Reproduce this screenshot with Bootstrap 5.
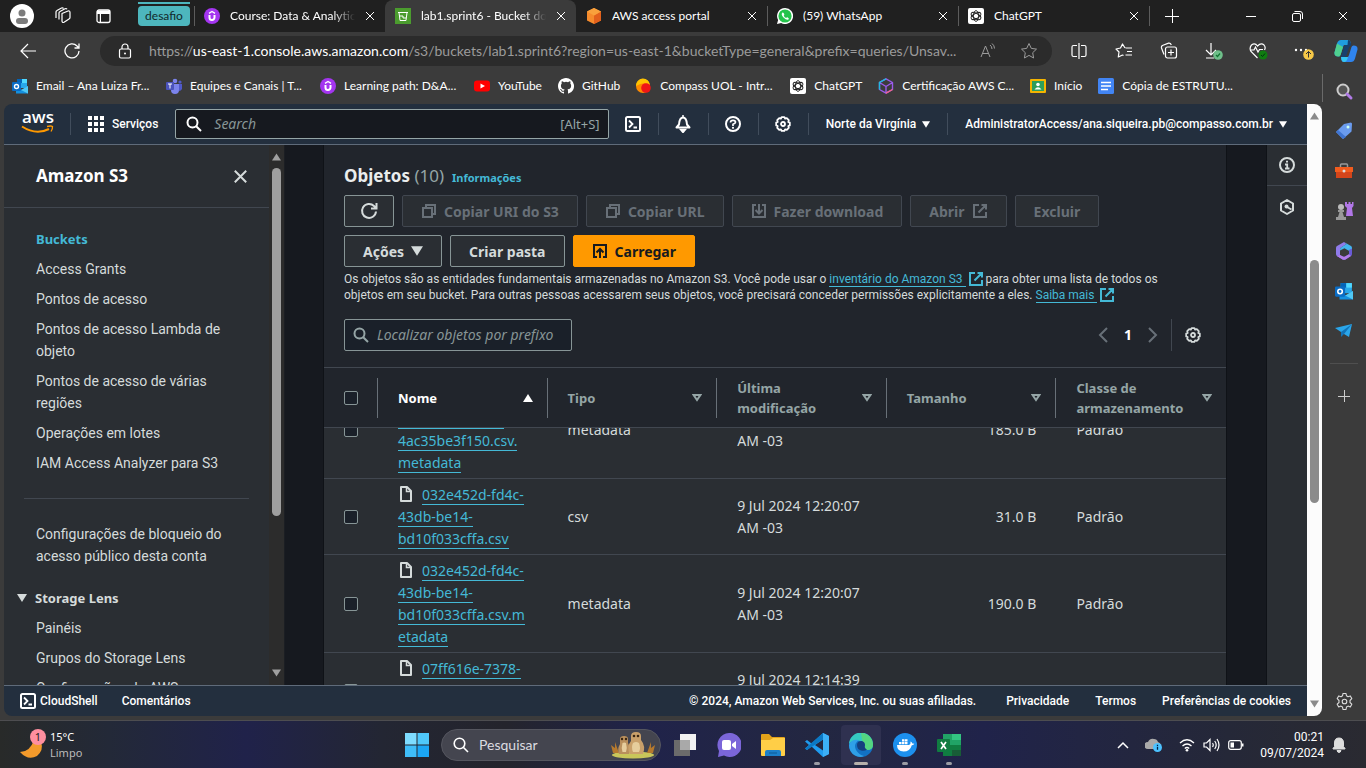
<!DOCTYPE html>
<html lang="pt-BR" data-bs-theme="dark">
<head>
<meta charset="utf-8">
<meta name="viewport" content="width=device-width, initial-scale=1">
<title>lab1.sprint6 - Bucket do S3</title>
<link href="https://cdn.jsdelivr.net/npm/bootstrap@5.3.0/dist/css/bootstrap.min.css" rel="stylesheet">
<style>
:root{--chrome:Lato,"Open Sans",sans-serif;--ember:"Noto Sans","Open Sans",sans-serif;--ember-text:Roboto,"Noto Sans",sans-serif;
  --line:#414750;--panel:#2a2e33;--head:#21252c;--ink:#d5dbdb;--link:#44b9d6}
body{background:#3b3b3b;color:#fff;font-family:var(--chrome);font-size:12px;line-height:16px;overflow:hidden}
svg{display:block;flex:none}
.ln{fill:none}
.ln:not([stroke]){stroke:currentColor}
.plain{background:none;border:0;padding:0;color:inherit;font:inherit;display:flex;align-items:center;justify-content:center}
a{color:inherit;text-decoration:none}

/* browser: tabs */
.tab-strip{height:32px;background:#202020;padding-left:10px}
.strip-start{width:128px}
.avatar{width:24px;height:24px;border-radius:50%;background:#fff;overflow:hidden}
.group-tag{height:28px;width:52px;padding-top:2px}
.group-tag span{background:#4db6bd;color:#12292b;border-radius:4px;height:20px;line-height:19px;text-align:center;display:block;margin-top:2px}
.group-tag::before{content:"";display:block;height:2px;background:#4db6bd}
.btab{width:191px;padding:0 10px;gap:10px;min-width:0}
.btab .ttl{flex:1;overflow:hidden;white-space:nowrap}
.btab .fade-end{-webkit-mask-image:linear-gradient(90deg,#000 82%,transparent);mask-image:linear-gradient(90deg,#000 82%,transparent)}
.btab.cur{background:#3b3b3b;border-radius:8px 8px 0 0}
.tick{width:1px;height:20px;background:#5c5c5c;margin:6px -1px 0 0;flex:none}
.win-btn{width:46px;height:32px}

/* browser: address row and bookmarks */
.tool-row{height:38px;padding:0 4px 0 6px}
.tool-btn{width:45px;height:30px}
.nav-btn{width:44px;height:30px}
.url-box{background:#2b2b2b;border-radius:15px;height:30px;padding:0 14px 0 17px;margin-left:6px;font-size:14px;line-height:20px;color:#9b9b9b;min-width:0}
.url-box b{font-weight:400;color:#fff}
.bm-row{height:34px;padding:0 8px 2px;gap:16px;white-space:nowrap;overflow:hidden;flex:none}
.bm-row a{display:flex;align-items:center;gap:8px}
.bm-row .wide{min-width:138px}
.side-bar{width:44px;padding:11px 0 10px;gap:20px}
.side-bar hr{width:28px;margin:2px 0 6px;border-color:#8a8a8a}
.side-tick{width:1px;height:28px;background:#6a6a6a;margin:4px -1px 0 0;flex:none}

/* page frame */
.page-view{margin:0 0 4px 4px;border-radius:8px;overflow:hidden}
.sb{flex:none;width:15px;padding:8px 0;align-items:center}
.sb i{width:9px;border-radius:5px;background:#8b8b8b;margin:7px 0}
.sb-page{background:#fcfcfc;color:#8b8b8b}
.sb-nav{background:#2c2c2c;color:#9f9f9f;border-right:1px solid #1b1e23;width:16px}
.sb-nav i{background:#9f9f9f}

/* console header and footer */
.aws-top{height:41px;background:#232f3e;border-bottom:1px solid #5f6b7a;font-family:var(--ember-text);font-weight:500}
.vr-nav{width:1px;height:22px;background:#414d5c;align-self:center;flex:none}
.aws-logo{width:66px;padding-left:17px}
.svc{padding:0 17px;gap:8px}
.top-search{height:30px;background:#16191f;border:1px solid #95a5a6;border-radius:2px;font-family:var(--ember);font-size:14px;font-weight:400}
.top-search span{color:#95a5a6;font-size:13px}
.top-search input,.find input{background:none;border:0;outline:0;color:#fff;min-width:0;padding:0}
.top-search input::placeholder,.find input::placeholder{font-style:italic;color:#879596;opacity:1}
.ico-cell{width:49px}
.menu-cell{padding:0 17px;gap:6px}
.aws-foot{height:31px;background:#232f3e;border-top:1px solid #5f6b7a;font-family:var(--ember-text);font-weight:500;padding:0 16px}
.foot-links{gap:26px}

/* service navigation */
.s3-nav{width:281px;background:var(--panel);color:var(--ink)}
.s3-nav .scroll-part{overflow:hidden;font:14px/22px var(--ember-text)}
.nav-head{height:63px;padding:0 22px 0 32px;border-bottom:1px solid var(--line);flex:none}
.nav-head h2{font:700 17px/22px var(--ember);margin:0}
.nav-links{padding:20px 32px 0;gap:8px;margin:0;list-style:none}
.nav-links .cur-link{color:var(--link);font:700 13px/22px var(--ember)}
.nav-rule{height:1px;background:var(--line);margin:24px 20px 4px;flex:none}
.sec-btn{font:700 13px/22px var(--ember);gap:8px;margin:20px 0 0 13px;align-self:flex-start}

/* bucket content */
.well{background:#16191f;padding:0 39px 0 38px}
.obj{background:var(--head);border:solid #0f1217;border-width:0 1px;color:var(--ink)}
.obj-head{padding:20px 20px 16px}
.obj-head h1{font:700 17px/22px var(--ember);margin:0;color:#eaeded}
.obj-head h1 small{font-weight:400;color:#95a5a6;font-size:17px}
.info{font:700 11px/16px var(--ember);color:var(--link)}
.acts{gap:8px;max-width:840px}
.btn-c{--bs-btn-font-family:var(--ember);--bs-btn-font-size:14px;--bs-btn-font-weight:700;--bs-btn-padding-x:18px;--bs-btn-padding-y:0;
  --bs-btn-border-radius:2px;--bs-btn-color:#d5dbdb;--bs-btn-bg:#2a2e33;--bs-btn-border-color:#879596;--bs-btn-hover-color:#fff;--bs-btn-hover-border-color:#d5dbdb;
  --bs-btn-disabled-color:#687078;--bs-btn-disabled-bg:#2a2e33;--bs-btn-disabled-border-color:#414750;--bs-btn-disabled-opacity:1;
  height:32px;display:flex;align-items:center;gap:7px}
.btn-sq{--bs-btn-padding-x:15px}
.btn-o{--bs-btn-color:#16191f;--bs-btn-bg:#f90;--bs-btn-border-color:#f90}
.desc{font:12px/16px var(--ember-text);margin:4px 0 16px;max-width:830px}
.desc a{color:var(--link);border-bottom:1px solid}
.desc svg{display:inline;vertical-align:-3px;color:var(--link)}
.find{width:228px;height:32px;border:1px solid #879596;border-radius:2px;background:#1a2029;font:14px/22px var(--ember);color:#95a5a6}
.pager{gap:16px;font:700 14px/22px var(--ember);color:#687078;padding-right:5px}
.pager-rule{width:1px;height:32px;background:#414750;margin:0 -3px}

/* object table */
.rows{overflow:hidden;min-height:0;border-top:1px solid var(--line)}
.obj-table{width:100%;table-layout:fixed;border-collapse:separate;border-spacing:0;font:14px/22px var(--ember)}
.obj-table th{position:sticky;top:0;z-index:1;height:60px;background:var(--head);border-bottom:1px solid var(--line);padding:0;font:700 13px/20px var(--ember);color:#95a5a6}
.obj-table th>div{height:40px;border-right:1px solid #687078;padding:0 14px 0 20px;display:flex;align-items:center;justify-content:space-between}
.obj-table th:last-child>div{border:0}
.obj-table td{background:var(--panel);border-bottom:1px solid var(--line);padding:5px 20px 4px;vertical-align:middle}
.obj-table td a{color:var(--link);border-bottom:1px solid}
.obj-table td svg{display:inline;vertical-align:-2px;margin-right:8px}
.col-tick{width:54px}
.tickbox{appearance:none;display:block;width:14px;height:14px;margin:0;border:1px solid #879596;border-radius:2px;background:#1a2029}
.tools{width:41px;background:var(--panel);border-left:1px solid #0f1217;color:var(--ink)}
.tools button{height:41px}
.tools button:first-child{border-bottom:1px solid var(--line)}

/* taskbar */
.task{height:48px;border-top:1px solid #4d4d50;display:grid;grid-template-columns:1fr auto 1fr;
  background:linear-gradient(90deg,#282a29 0,#232938 8%,#20224a 18%,#232633 28%,#24242c 37%,#20234a 47%,#232741 60%,#20234a 72%,#252838 90%,#2a2a31 100%)}
.weather{padding-left:19px;font-family:var(--ember);font-size:11px;gap:4px}
.apps{gap:4px}
.app{width:40px;height:40px;border-radius:4px;position:relative}
.app.open::after{content:"";position:absolute;bottom:0;width:6px;height:3px;border-radius:2px;background:#9c9ca4}
.app.front{background:#2f3150}
.app.front::after{width:14px;background:#b7b0ab}
.task-find{width:220px;height:32px;border-radius:16px;background:#44454f;border:1px solid #55565f;padding:0 4px 0 11px;gap:10px}
.task-find input{background:none;border:0;outline:0;width:120px;font-size:14px;color:#ddd;padding:0}
.task-find input::placeholder{color:#dcdce0;opacity:1}
.tray{padding-right:20px;font-family:var(--ember-text)}
</style>
</head>
<body class="vh-100 d-flex flex-column">

<svg width="0" height="0" class="position-absolute">
 <symbol id="x" viewBox="0 0 10 10"><path class="ln" d="M1 1l8 8M9 1l-8 8"/></symbol>
 <symbol id="udemy" viewBox="0 0 16 16"><circle cx="8" cy="8" r="8" fill="#a435f0"/><path class="ln" stroke="#fff" stroke-width="2" d="M5.500 7v2.500a2.500 2.500 0 0 0 5 0V7"/><path class="ln" stroke="#fff" stroke-width="1.300" d="M5 5.400L8 3.500l3 1.900"/></symbol>
 <symbol id="gpt" viewBox="0 0 16 16"><rect width="16" height="16" rx="2" fill="#fff"/><g fill="none" stroke="#222" stroke-width=".9"><ellipse cx="8" cy="8" rx="2.600" ry="5.400"/><ellipse cx="8" cy="8" rx="2.600" ry="5.400" transform="rotate(60 8 8)"/><ellipse cx="8" cy="8" rx="2.600" ry="5.400" transform="rotate(120 8 8)"/></g></symbol>
 <symbol id="outlook" viewBox="0 0 16 16"><rect x="5" y="1" width="10" height="9" fill="#28a8ea"/><path d="M5 1h5v4H5z" fill="#0364b8"/><path d="M10 1h5v4h-5z" fill="#50d9ff"/><path d="M4 8l6 4 6-4v7.500H4z" fill="#1490df"/><path d="M16 8v7.500L9 12z" fill="#50c8f5"/><rect y="4" width="9" height="9" rx="1" fill="#0a6cc4"/><circle cx="4.500" cy="8.500" r="2" fill="none" stroke="#fff" stroke-width="1.400"/></symbol>
 <symbol id="ext" viewBox="0 0 16 16"><path class="ln" stroke-width="2" d="M7 2H2v12h12V9M9.500 2H14v4.500M14 2L6.500 9.500"/></symbol>
 <symbol id="copy" viewBox="0 0 16 16"><path class="ln" stroke-width="2" d="M2 5h9v9H2zM5 5V2h9v9h-3"/></symbol>
 <symbol id="gear" viewBox="0 0 16 16"><circle class="ln" cx="8" cy="8" r="2" stroke-width="1.800"/><path class="ln" stroke-width="1.800" stroke-linejoin="round" d="M6.600 1.200h2.800l.7 1.500 1.700-.5 2 2-.5 1.700 1.500.7v2.800l-1.500.7.5 1.700-2 2-1.700-.5-.7 1.500H6.600l-.7-1.500-1.700.5-2-2 .5-1.700-1.500-.7V6.600l1.500-.7-.5-1.700 2-2 1.700.5z"/></symbol>
 <symbol id="mag" viewBox="0 0 16 16"><circle class="ln" cx="6.500" cy="6.500" r="5" stroke-width="2"/><path class="ln" stroke-width="2" d="M10.200 10.200L15 15"/></symbol>
 <symbol id="shell" viewBox="0 0 16 16"><rect class="ln" x="1" y="1" width="14" height="14" rx="1.500" stroke-width="2"/><path class="ln" stroke-width="1.800" d="M4 4.500L7.500 8 4 11.500M8.500 11.500H12"/></symbol>
 <symbol id="file" viewBox="0 0 16 16"><path class="ln" stroke-width="2" stroke-linejoin="round" d="M3 1h6l4 4v10H3z"/><path class="ln" stroke-width="1.500" d="M8.500 1v4.500H13"/></symbol>
 <symbol id="dn" viewBox="0 0 10 8"><path d="M0 0h10L5 8z" fill="currentColor"/></symbol>
 <symbol id="sort" viewBox="0 0 10 8"><path class="ln" stroke-width="2" d="M1.600 1h6.800L5 6z"/></symbol>
 <symbol id="up" viewBox="0 0 10 8"><path d="M5 0l5 8H0z" fill="currentColor"/></symbol>
</svg>

<header>
 <div class="tab-strip d-flex">
  <div class="strip-start d-flex align-items-center">
   <button class="plain avatar" aria-label="Perfil"><svg width="24" height="24"><circle cx="12" cy="9" r="3.500" fill="#7c7c7c"/><rect x="6" y="14" width="12" height="6" rx="3" fill="#7c7c7c"/></svg></button>
   <button class="plain ms-3 ps-1 me-4" aria-label="Espaços de trabalho"><svg width="18" height="18" viewBox="0 0 18 18"><g fill="none" stroke="#fff" stroke-width="1.200" stroke-linejoin="round"><path d="M8 6.500l6-2.500q2-.5 2 1.500v5q0 1-1 1.500l-5 3.300q-2 .7-2-1.300z"/><path d="M5 12.500V6q0-1 1-1.500l5-2.800q1.500-.5 2 .5M2 11V5q0-1 1-1.500L7.500 1Q9 .5 9.500 1.500"/></g></svg></button>
   <button class="plain" aria-label="Guias"><svg width="16" height="16" viewBox="0 0 16 16"><rect class="ln" x="1" y="2" width="13" height="12.500" rx="2" stroke-width="1.300"/><path d="M1 2.500h13V6H5v8H3.800V6H1z" fill="#fff"/></svg></button>
  </div>
  <div class="group-tag"><span>desafio</span></div>
  <div class="tick ms-1"></div>
  <div class="btab d-flex align-items-center"><svg width="16" height="16"><use href="#udemy"/></svg><span class="ttl fade-end">Course: Data &amp; Analytics</span><button class="plain" aria-label="Fechar"><svg width="10" height="10"><use href="#x"/></svg></button></div>
  <div class="btab cur d-flex align-items-center"><svg width="16" height="16"><rect width="16" height="16" fill="#4b9c2e"/><path class="ln" stroke="#fff" d="M3 4.500h10M4 4.500l1 8h6l1-8M4 8h4v2h3"/></svg><span class="ttl fade-end">lab1.sprint6 - Bucket do S3</span><button class="plain" aria-label="Fechar"><svg width="10" height="10"><use href="#x"/></svg></button></div>
  <div class="btab d-flex align-items-center"><svg width="16" height="16"><path d="M8 0l7 3.500v9L8 16l-7-3.500v-9z" fill="#f68b2c"/><path d="M8 7.500l7-4v9L8 16z" fill="#e2601c"/><path d="M8 0l7 3.500-7 4-7-4z" fill="#f9a13c"/></svg><span class="ttl">AWS access portal</span><button class="plain" aria-label="Fechar"><svg width="10" height="10"><use href="#x"/></svg></button></div>
  <div class="tick"></div>
  <div class="btab d-flex align-items-center"><svg width="16" height="16"><path d="M8 0a8 8 0 1 1-3.800 15L0 16l1.100-4A8 8 0 0 1 8 0z" fill="#fff"/><circle cx="8" cy="8" r="6.600" fill="#25c34b"/><path d="M5.500 4.500q-2 2 1 5t5 2q1-1-.7-2-1.200-.6-1.500.5-2-.6-2.600-2.600 1-.5.5-1.500-.7-1.900-1.700-1.400z" fill="#fff"/></svg><span class="ttl">(59) WhatsApp</span><button class="plain" aria-label="Fechar"><svg width="10" height="10"><use href="#x"/></svg></button></div>
  <div class="tick"></div>
  <div class="btab d-flex align-items-center"><svg width="16" height="16"><use href="#gpt"/></svg><span class="ttl">ChatGPT</span><button class="plain" aria-label="Fechar"><svg width="10" height="10"><use href="#x"/></svg></button></div>
  <div class="tick"></div>
  <button class="plain win-btn" aria-label="Nova guia"><svg width="14" height="14"><path class="ln" d="M7.500 0v14M0 7.500h14"/></svg></button>
  <div class="ms-auto d-flex">
   <button class="plain win-btn" aria-label="Minimizar"><svg width="10" height="10"><path class="ln" d="M0 5.500h10"/></svg></button>
   <button class="plain win-btn" aria-label="Restaurar"><svg width="11" height="11"><rect class="ln" x=".5" y="2.500" width="8" height="8" rx="1.500"/><path class="ln" d="M2.500.5H8q2.500 0 2.500 2.500v5"/></svg></button>
   <button class="plain win-btn" aria-label="Fechar janela"><svg width="10" height="10"><use href="#x"/></svg></button>
  </div>
 </div>

 <div class="tool-row d-flex align-items-center">
  <button class="plain nav-btn" aria-label="Voltar"><svg width="18" height="16"><path class="ln" stroke-width="1.200" d="M17 8H2M9 1L2 8l7 7"/></svg></button>
  <button class="plain nav-btn" aria-label="Atualizar"><svg width="16" height="16"><path class="ln" stroke-width="1.300" d="M15 8a7 7 0 1 1-2-5l2 2M15 .5V5h-4.500"/></svg></button>
  <div class="url-box d-flex align-items-center flex-grow-1">
   <svg width="16" height="16" class="text-white me-3"><path class="ln" stroke-width="1.200" d="M5 6V4a3 3 0 0 1 6 0v2"/><rect class="ln" x="2.500" y="6" width="11" height="9" rx="1.500" stroke-width="1.200"/><circle cx="8" cy="10.500" r="1" fill="#fff"/></svg>
   <div class="text-truncate">https://<b>us-east-1.console.aws.amazon.com</b>/s3/buckets/lab1.sprint6?region=us-east-1&amp;bucketType=general&amp;prefix=queries/Unsav...</div>
   <button class="plain ms-auto me-4" aria-label="Ler em voz alta"><svg width="16" height="16" viewBox="0 0 16 16"><path class="ln" d="M1 14L5.500 3 10 14M2.500 10.500h6M10 2q2 1.500 2 4M12 .5q2.500 2 2.500 5"/></svg></button>
   <button class="plain" aria-label="Favoritar"><svg width="18" height="18" viewBox="0 0 18 18"><path class="ln" stroke-linejoin="round" d="M9 1.500l2.300 4.900 5.200.7-3.800 3.600.9 5.300L9 13.400 4.400 16l.9-5.300L1.500 7.100l5.200-.7z"/></svg></button>
  </div>
  <div class="d-flex ms-1">
   <button class="plain tool-btn" aria-label="Dividir tela"><svg width="16" height="16"><path class="ln" stroke-width="1.200" d="M8 0v16M6 2.500H2.500q-1.500 0-1.500 1.500v8q0 1.500 1.500 1.500H6M10 2.500h3.500q1.500 0 1.500 1.500v8q0 1.500-1.500 1.500H10"/></svg></button>
   <button class="plain tool-btn" aria-label="Favoritos"><svg width="18" height="18"><path class="ln" stroke-width="1.200" stroke-linejoin="round" d="M10 6L7.500 2 5.500 6 1 7l3 3-.7 5L7.500 13l1 .6M10.500 6H17M12 9.500h5M10.500 13H17"/></svg></button>
   <button class="plain tool-btn" aria-label="Coleções"><svg width="18" height="18"><path class="ln" stroke-width="1.200" d="M4 12.500L1.500 6q-.5-2 1.500-2.800L8.500 1.200Q10.500.8 11.300 3"/><rect class="ln" x="5.500" y="5" width="11" height="11" rx="2" stroke-width="1.200"/><path class="ln" stroke-width="1.200" d="M11 7.500v6M8 10.500h6"/></svg></button>
   <button class="plain tool-btn" aria-label="Downloads"><svg width="18" height="18"><path class="ln" stroke-width="1.200" d="M6 1v12M1 8l5 5 5-5M1 16h8"/><circle cx="13" cy="13" r="4.800" fill="#6fbf8a"/><path class="ln" stroke="#117733" stroke-width="1.200" d="M11 13l1.500 1.500L15 11.500"/></svg></button>
   <button class="plain tool-btn" aria-label="Desempenho"><svg width="20" height="18"><path class="ln" stroke-width="1.200" d="M8.500 16L2 9.500Q0 6 2.500 3 6 .5 8.500 4 12 .5 15 3q2 2.500.5 5M2 8h3l1.500-3L9 10l1.500-2.500H14"/><circle cx="14" cy="13" r="4.500" fill="#107c10"/><path class="ln" stroke="#003311" d="M12 13l1.500 1.500 2.500-3"/></svg></button>
   <button class="plain tool-btn" aria-label="Mais"><svg width="20" height="18"><g fill="#fff"><circle cx="2" cy="8" r="1.200"/><circle cx="7" cy="8" r="1.200"/><circle cx="12" cy="8" r="1.200"/></g><circle cx="14.500" cy="12.500" r="5.300" fill="#f7c948"/><path class="ln" stroke="#333333" d="M14.500 15.500v-6M12 12l2.500-2.500L17 12"/></svg></button>
   <button class="plain px-1 ms-1" aria-label="Copilot"><svg width="24" height="24" viewBox="0 0 24 24"><path d="M7 1h7q2 0 2.500 2l.5 3H10.500q-1 0-1.500 2L6.500 16q-.5 1.500-2 1.500Q0 17.500.500 13.500L3 4.500Q4 1 7 1z" fill="#1f9de0"/><path d="M3 4.500L.5 13.500q-.5 4 4 4 1.500 0 2-1.500l2.500-8z" fill="#4fd08f"/><path d="M17 23h-7q-2 0-2.500-2L7 18h6.500q1 0 1.500-2l2.500-8q.5-1.500 2-1.500 4.500 0 4 4L21 19.500Q20 23 17 23z" fill="#2f84ee"/><path d="M14 1q2 0 2.500 2l1 3.500q-2 0-2.500 2L12.500 16q-.5 2-2 2H7l3-10q.5-2 2-2h1.500z" fill="#17406f"/><path d="M7 18h7q-1 5-4 5-2 0-2.500-2z" fill="#35c5f2"/></svg></button>
  </div>
 </div>
</header>

<div class="d-flex flex-grow-1" style="min-height:0">
 <div class="d-flex flex-column flex-grow-1" style="min-width:0">
  <nav class="bm-row d-flex align-items-center ps-2 ms-1" aria-label="Favoritos">
   <a class="wide" href="#"><svg width="16" height="16"><use href="#outlook"/></svg>Email – Ana Luiza Fr...</a>
   <a class="wide" href="#"><svg width="16" height="16"><circle cx="9" cy="3" r="2.300" fill="#7b83eb"/><circle cx="14" cy="4" r="1.600" fill="#5059c9"/><path d="M5 6h8v6a4 4 0 0 1-8 0z" fill="#7b83eb"/><path d="M13 6h3v5q-1 2-3 2z" fill="#5059c9"/><rect y="4" width="8" height="8" rx="1" fill="#4b53bc"/><path d="M2 6h4M4 6v4.500" stroke="#fff"/></svg>Equipes e Canais | T...</a>
   <a class="wide" href="#"><svg width="16" height="16"><use href="#udemy"/></svg>Learning path: D&amp;A...</a>
   <a href="#"><svg width="16" height="16"><rect y="2.500" width="16" height="11" rx="3" fill="#f00"/><path d="M6.500 5.500v5L11 8z" fill="#fff"/></svg>YouTube</a>
   <a href="#"><svg width="16" height="16"><path fill="#fff" d="M8 0C3.580 0 0 3.580 0 8c0 3.540 2.290 6.530 5.470 7.590.4.070.55-.17.55-.38v-1.490c-2.010.37-2.530-.49-2.690-.94-.09-.23-.48-.94-.82-1.130-.28-.15-.68-.52-.01-.53.63-.01 1.080.58 1.230.82.72 1.210 1.870.87 2.330.66.070-.52.28-.87.51-1.070-1.780-.2-3.640-.89-3.640-3.950 0-.87.31-1.590.82-2.150-.08-.2-.36-1.020.08-2.120 0 0 .67-.21 2.200.82a7.600 7.600 0 0 1 4 0c1.530-1.040 2.200-.82 2.200-.82.44 1.100.16 1.920.08 2.120.51.56.82 1.270.82 2.150 0 3.070-1.870 3.750-3.650 3.950.29.25.54.73.54 1.480v2.200c0 .21.15.46.55.38A8 8 0 0 0 8 0z"/></svg>GitHub</a>
   <a class="wide" href="#"><svg width="16" height="16"><circle cx="7" cy="8" r="7" fill="#ff8a00"/><path d="M0 8a7 7 0 0 1 14-1Q8 3 0 8z" fill="#ffc400"/><circle cx="10" cy="10" r="4.800" fill="#f01616"/></svg>Compass UOL - Intr...</a>
   <a href="#"><svg width="16" height="16"><use href="#gpt"/></svg>ChatGPT</a>
   <a href="#"><svg width="16" height="16"><path class="ln" stroke="#9b5bea" stroke-width="1.400" stroke-linejoin="round" d="M8 .8l6.500 3.700v7L8 15.200l-6.500-3.700v-7zM1.500 4.500L8 8.500l6.500-4M8 8.500v6.700"/><path class="ln" stroke="#21b8e0" stroke-width="1.400" d="M8 .8L1.500 4.500v7"/><path class="ln" stroke="#f0648c" stroke-width="1.400" d="M8 15.200l6.500-3.700"/></svg>Certificação AWS C...</a>
   <a href="#"><svg width="16" height="16"><rect y="1" width="16" height="14" rx="1" fill="#f4b400"/><rect x="2" y="3" width="12" height="10" fill="#2e9e5b"/><circle cx="8" cy="6.500" r="1.800" fill="#fff"/><path d="M4.500 11.500Q8 7 11.500 11.500z" fill="#fff"/></svg>Início</a>
   <a href="#"><svg width="16" height="16"><rect width="16" height="16" rx="1.500" fill="#4285f4"/><path d="M3 4.500h10M3 8h10M3 11.500h7" stroke="#fff" stroke-width="1.600"/></svg>Cópia de ESTRUTU...</a>
  </nav>

  <div class="page-view d-flex flex-grow-1" style="min-height:0">
   <div class="d-flex flex-column flex-grow-1" style="min-width:0">
    <div class="aws-top d-flex flex-shrink-0">
     <a class="aws-logo d-flex align-items-center" href="#" aria-label="AWS"><svg width="34" height="38" viewBox="0 -5 34 38"><text x="1" y="13" font-family="Open Sans" font-size="17" font-weight="600" fill="#fff">aws</text><path d="M1 16.500q14 9 27 2.500" fill="none" stroke="#f90" stroke-width="2"/><path d="M26 16.500q4-1 5.500 0 .3 2-1.500 5" fill="none" stroke="#f90" stroke-width="1.300"/></svg></a>
     <div class="vr-nav"></div>
     <button class="plain svc"><svg width="16" height="16"><g fill="#fff"><rect width="4" height="4"/><rect x="6" width="4" height="4"/><rect x="12" width="4" height="4"/><rect y="6" width="4" height="4"/><rect x="6" y="6" width="4" height="4"/><rect x="12" y="6" width="4" height="4"/><rect y="12" width="4" height="4"/><rect x="6" y="12" width="4" height="4"/><rect x="12" y="12" width="4" height="4"/></g></svg>Serviços</button>
     <label class="top-search d-flex align-items-center flex-grow-1 align-self-center px-2 gap-2"><svg width="18" height="16" viewBox="-2 0 18 16" class="me-1"><use href="#mag" width="16" height="16"/></svg><input class="flex-grow-1" type="text" placeholder="Search" aria-label="Search"><span>[Alt+S]</span></label>
     <button class="plain ico-cell" aria-label="CloudShell"><svg width="16" height="16"><use href="#shell"/></svg></button><div class="vr-nav"></div>
     <button class="plain ico-cell" aria-label="Notificações"><svg width="16" height="18" viewBox="0 0 16 18"><path class="ln" stroke-width="2" stroke-linejoin="round" d="M1.500 12.500L4 9.500q.5-7 4-7t4 7l2.500 3z"/><path d="M8 0v3M5.500 14.500h5L8 17.500z" stroke="#fff" stroke-width="1.500" fill="#fff"/></svg></button><div class="vr-nav"></div>
     <button class="plain ico-cell" aria-label="Ajuda"><svg width="16" height="16"><circle class="ln" cx="8" cy="8" r="7" stroke-width="2"/><path class="ln" stroke-width="1.700" d="M5.500 6.500Q5.500 4.300 8 4.300t2.500 2Q10.500 7.500 8 8.300V10"/><circle cx="8" cy="11.800" r="1.100" fill="#fff"/></svg></button><div class="vr-nav"></div>
     <button class="plain ico-cell" aria-label="Configurações"><svg width="16" height="16"><use href="#gear"/></svg></button><div class="vr-nav"></div>
     <button class="plain menu-cell">Norte da Virgínia <svg width="8" height="7"><use href="#dn"/></svg></button><div class="vr-nav"></div>
     <button class="plain menu-cell pe-3 me-1">AdministratorAccess/ana.siqueira.pb@compasso.com.br <svg width="8" height="7"><use href="#dn"/></svg></button>
    </div>

    <div class="d-flex flex-grow-1" style="min-height:0">
     <aside class="s3-nav d-flex flex-shrink-0">
      <div class="scroll-part d-flex flex-column flex-grow-1">
       <div class="nav-head d-flex align-items-center justify-content-between"><h2>Amazon S3</h2><button class="plain" aria-label="Fechar navegação"><svg width="13" height="13" viewBox="0 0 13 13"><path class="ln" stroke-width="2" d="M.8.8l11.400 11.400M12.200.8L.8 12.200"/></svg></button></div>
       <ul class="nav-links d-flex flex-column">
        <li><a class="cur-link" href="#">Buckets</a></li>
        <li><a href="#">Access Grants</a></li>
        <li><a href="#">Pontos de acesso</a></li>
        <li><a href="#">Pontos de acesso Lambda de objeto</a></li>
        <li><a href="#">Pontos de acesso de várias regiões</a></li>
        <li><a href="#">Operações em lotes</a></li>
        <li><a href="#">IAM Access Analyzer para S3</a></li>
       </ul>
       <div class="nav-rule"></div>
       <ul class="nav-links d-flex flex-column"><li><a href="#">Configurações de bloqueio do acesso público desta conta</a></li></ul>
       <button class="plain sec-btn"><svg width="10" height="8"><use href="#dn"/></svg>Storage Lens</button>
       <ul class="nav-links d-flex flex-column pt-2 flex-shrink-0">
        <li><a href="#">Painéis</a></li>
        <li><a href="#">Grupos do Storage Lens</a></li>
        <li><a href="#">Configurações do AWS</a></li>
       </ul>
      </div>
      <div class="sb sb-nav d-flex flex-column"><svg width="9" height="8"><use href="#up"/></svg><i style="flex:351"></i><div style="flex:147"></div><svg width="9" height="8"><use href="#dn"/></svg></div>
     </aside>

     <main class="well flex-grow-1" style="min-width:0">
      <section class="obj d-flex flex-column h-100">
       <div class="obj-head">
        <div class="d-flex align-items-baseline gap-2 mb-2"><h1>Objetos <small>(10)</small></h1><a class="info" href="#">Informações</a></div>
        <div class="acts d-flex flex-wrap">
         <button class="btn btn-c btn-sq" aria-label="Atualizar lista"><svg width="18" height="18" viewBox="0 0 18 18"><path class="ln" stroke-width="2" d="M16 9.500a7 7 0 1 1-2-5.500l2 2M16.500 1v5.500H11"/></svg></button>
         <button class="btn btn-c" disabled><svg width="16" height="16"><use href="#copy"/></svg>Copiar URI do S3</button>
         <button class="btn btn-c" disabled><svg width="16" height="16"><use href="#copy"/></svg>Copiar URL</button>
         <button class="btn btn-c" disabled><svg width="16" height="16"><path class="ln" stroke-width="2" d="M5 2H2v12h12V2h-3M8 1v9M4.500 7L8 10.500 11.500 7"/></svg>Fazer download</button>
         <button class="btn btn-c" disabled>Abrir<svg width="16" height="16"><use href="#ext"/></svg></button>
         <button class="btn btn-c" disabled>Excluir</button>
         <button class="btn btn-c">Ações<svg width="12" height="10"><use href="#dn"/></svg></button>
         <button class="btn btn-c">Criar pasta</button>
         <button class="btn btn-c btn-o"><svg width="16" height="16"><path class="ln" stroke-width="2" d="M5 14H2V2h12v12h-3M8 15V6M4.500 9.500L8 6l3.500 3.500"/></svg>Carregar</button>
        </div>
        <p class="desc">Os objetos são as entidades fundamentais armazenadas no Amazon S3. Você pode usar o <a href="#">inventário do Amazon S3&nbsp;</a> <svg width="14" height="14" viewBox="1 1 14 14"><use href="#ext" width="16" height="16"/></svg> para obter uma lista de todos os objetos em seu bucket. Para outras pessoas acessarem seus objetos, você precisará conceder permissões explicitamente a eles. <a href="#">Saiba mais&nbsp;</a> <svg width="14" height="14" viewBox="1 1 14 14"><use href="#ext" width="16" height="16"/></svg></p>
        <div class="d-flex align-items-center justify-content-between">
         <label class="find d-flex align-items-center gap-2 px-2"><svg width="16" height="16"><use href="#mag"/></svg><input class="flex-grow-1" type="text" placeholder="Localizar objetos por prefixo" aria-label="Localizar objetos por prefixo"></label>
         <div class="pager d-flex align-items-center">
          <button class="plain" aria-label="Página anterior"><svg width="10" height="16"><path class="ln" stroke-width="2" d="M9 1L2 8l7 7"/></svg></button>
          <span class="text-white">1</span>
          <button class="plain" aria-label="Próxima página"><svg width="10" height="16"><path class="ln" stroke-width="2" d="M1 1l7 7-7 7"/></svg></button>
          <div class="pager-rule"></div>
          <button class="plain" style="color:#d5dbdb" aria-label="Preferências"><svg width="16" height="16"><use href="#gear"/></svg></button>
         </div>
        </div>
       </div>

       <div class="rows flex-grow-1" id="rows">
        <table class="obj-table">
         <colgroup><col class="col-tick"><col><col><col><col><col></colgroup>
         <thead><tr>
          <th><div><input type="checkbox" class="tickbox" aria-label="Selecionar todos"></div></th>
          <th class="text-white"><div>Nome<svg width="10" height="8"><use href="#up"/></svg></div></th>
          <th><div>Tipo<svg width="10" height="8"><use href="#sort"/></svg></div></th>
          <th><div>Última modificação<svg width="10" height="8"><use href="#sort"/></svg></div></th>
          <th><div>Tamanho<svg width="10" height="8"><use href="#sort"/></svg></div></th>
          <th><div>Classe de armazenamento<svg width="10" height="8"><use href="#sort"/></svg></div></th>
         </tr></thead>
         <tbody>
          <tr><td><input type="checkbox" class="tickbox" aria-label="Selecionar objeto"></td><td><svg width="16" height="16"><use href="#file"/></svg><a href="#">02c6a1be-5d1e-<br>4a7f-9c2d-b81e-<br>4ac35be3f150.csv.<br>metadata</a></td><td>metadata</td><td>9 Jul 2024 12:14:39 AM -03</td><td class="text-end">185.0 B</td><td>Padrão</td></tr>
          <tr><td><input type="checkbox" class="tickbox" aria-label="Selecionar objeto"></td><td><svg width="16" height="16"><use href="#file"/></svg><a href="#">032e452d-fd4c-<br>43db-be14-<br>bd10f033cffa.csv</a></td><td>csv</td><td>9 Jul 2024 12:20:07 AM -03</td><td class="text-end">31.0 B</td><td>Padrão</td></tr>
          <tr><td><input type="checkbox" class="tickbox" aria-label="Selecionar objeto"></td><td><svg width="16" height="16"><use href="#file"/></svg><a href="#">032e452d-fd4c-<br>43db-be14-<br>bd10f033cffa.csv.m<br>etadata</a></td><td>metadata</td><td>9 Jul 2024 12:20:07 AM -03</td><td class="text-end">190.0 B</td><td>Padrão</td></tr>
          <tr><td><input type="checkbox" class="tickbox" aria-label="Selecionar objeto"></td><td><svg width="16" height="16"><use href="#file"/></svg><a href="#">07ff616e-7378-<br>4abd-bcd2-<br>91ce07d5a3f4.csv</a></td><td>csv</td><td>9 Jul 2024 12:14:39 AM -03</td><td class="text-end">31.0 B</td><td>Padrão</td></tr>
         </tbody>
        </table>
       </div>
      </section>
     </main>

     <div class="tools d-flex flex-column flex-shrink-0">
      <button class="plain" aria-label="Informações"><svg width="16" height="16"><circle class="ln" cx="8" cy="8" r="7" stroke-width="2"/><path class="ln" stroke-width="1.800" d="M6 7.500h2.200v4M6 11.500h4.500M7 4.700h2"/></svg></button>
      <button class="plain" aria-label="Diagnóstico"><svg width="16" height="16"><path class="ln" stroke-width="2" stroke-linejoin="round" d="M8 1l6 3.500v7L8 15l-6-3.500v-7z"/><circle cx="7.500" cy="7.500" r="2" fill="currentColor"/><path class="ln" stroke-width="2" d="M8 8l4.500 2.500"/></svg></button>
     </div>
    </div>

    <footer class="aws-foot d-flex align-items-center flex-shrink-0">
     <a class="d-flex align-items-center gap-1" href="#"><svg width="16" height="16"><use href="#shell"/></svg>CloudShell</a>
     <a class="ms-4" href="#">Comentários</a>
     <div class="foot-links d-flex ms-auto"><span class="me-1">© 2024, Amazon Web Services, Inc. ou suas afiliadas.</span><a href="#">Privacidade</a><a href="#">Termos</a><a href="#">Preferências de cookies</a></div>
    </footer>
   </div>
   <div class="sb sb-page d-flex flex-column"><svg width="9" height="8"><use href="#up"/></svg><div style="flex:133"></div><i style="flex:243"></i><div style="flex:190"></div><svg width="9" height="8"><use href="#dn"/></svg></div>
  </div>
 </div>

 <div class="side-tick"></div>
 <aside class="side-bar d-flex flex-column align-items-center flex-shrink-0">
  <button class="plain" aria-label="Pesquisar"><svg width="20" height="20"><circle cx="9" cy="9" r="5.500" fill="#555" stroke="#ccc" stroke-width="2"/><path d="M13 13l4 4" stroke="#b07be6" stroke-width="3" stroke-linecap="round"/></svg></button>
  <button class="plain" aria-label="Compras"><svg width="20" height="20"><path d="M10 3l7-1.500 1 1-.5 8L9 18l-7-7z" fill="#6a9bee"/><path d="M2 11l7 7 3-2-8-7z" fill="#3f74d1"/><circle cx="14" cy="6" r="1.500" fill="#cfe"/></svg></button>
  <button class="plain" aria-label="Ferramentas"><svg width="20" height="20"><path class="ln" stroke="#999999" stroke-width="1.500" d="M6.500 6V4q0-1 1-1h5q1 0 1 1v2"/><path d="M1 6h18v5H1z" fill="#f25c1e"/><path d="M2 11h16v6H2z" fill="#d4451a"/><circle cx="10" cy="10" r="1.500" fill="#ddd"/></svg></button>
  <button class="plain" aria-label="Jogos"><svg width="20" height="20"><path d="M11 1h2v2h1.500V1h2v2H18V1h1.500v4L18 7l1 8h-7l1-8-2-2z" fill="#b277e8"/><circle cx="7" cy="6" r="3" fill="#bbb"/><path d="M4 9h6v2H8.500l1.500 5h2v3H2v-3h2l1.500-5H4z" fill="#999"/></svg></button>
  <button class="plain" aria-label="Microsoft 365"><svg width="20" height="20"><path d="M10 1L3 5q-1 .6-1 2v6q0 1.400 1 2l3 1.700V8.500q0-1.500 1.300-2.300L12.500 3z" fill="#8f7bea"/><path d="M10 1l7 4q1 .6 1 2v4.500l-5-2.800-2.500-1.500L6 9.500V8.500q0-1.500 1.300-2.300L12.500 3z" fill="#43b4ee"/><path d="M18 7.500V13q0 1.400-1 2l-5.500 3.500q-1.500.7-3 0L3 15l3-1 3 1.500q1 .5 2 0l4-2.300V9z" fill="#6a5bd8"/><path d="M3 15l5.500 3.500q1.500.7 3 0L17 15l-2-1.800-4 2.300q-1 .5-2 0L6 14z" fill="#b47de9"/></svg></button>
  <button class="plain" aria-label="Outlook"><svg width="18" height="20" viewBox="0 0 16 16"><use href="#outlook"/></svg></button>
  <button class="plain" aria-label="Drop"><svg width="20" height="20"><path d="M1 7l17-4-3 13-5-3z" fill="#2aa6ea"/><path d="M18 3L7 11v5l3-3z" fill="#1273b8"/></svg></button>
  <hr>
  <button class="plain" aria-label="Adicionar"><svg width="12" height="12"><path class="ln" stroke="#cccccc" d="M6.500 0v12M0 6.500h12"/></svg></button>
  <button class="plain mt-auto" aria-label="Configurações do navegador"><svg width="17" height="17" viewBox="-.5 -.5 17 17"><g fill="none" stroke="#ddd" stroke-width="1.100" stroke-linejoin="round"><circle cx="8" cy="8" r="2.300"/><path d="M6.500 0h3l.5 2.300 1.500.9 2.300-.8 1.500 2.700L13.500 7v2l1.800 1.700-1.500 2.700-2.300-.8-1.500.9-.5 2.500h-3L6 13.500l-1.500-.9-2.300.8-1.500-2.700L2.500 9V7L.7 5.100l1.500-2.700 2.300.8L6 2.300z"/></g></svg></button>
 </aside>
</div>

<footer class="task flex-shrink-0">
 <div class="weather d-flex align-items-center">
  <svg width="27" height="32" viewBox="0 0 27 32"><path d="M1 23q10 0 14-12l7 2q3 8-4 14-9 5-17-4z" fill="#f39a2b"/><circle cx="19" cy="8" r="8" fill="#ff8f9f"/><text x="19" y="12" text-anchor="middle" font-family="Noto Sans" font-size="11" fill="#222">1</text></svg>
  <div><div>15°C</div><div style="color:#bcbcbc">Limpo</div></div>
 </div>
 <div class="apps d-flex align-items-center">
  <button class="plain app" aria-label="Iniciar"><svg width="24" height="24"><g fill="#3fbdf8"><path d="M0 0h11.500v11.500H0z" fill="#7edcff"/><path d="M12.500 0H24v11.500H12.500z" fill="#4fc8fb"/><path d="M0 12.500h11.500V24H0z"/><path d="M12.500 12.500H24V24H12.500z" fill="#1ba6f5"/></g></svg></button>
  <label class="task-find d-flex align-items-center"><svg width="16" height="16" viewBox="0 0 16 16"><circle class="ln" cx="6.500" cy="6.500" r="5.300" stroke-width="1.600"/><path class="ln" stroke-width="1.600" d="M10.500 10.500L15 15"/></svg><input type="text" placeholder="Pesquisar" aria-label="Pesquisar"><svg class="ms-auto" width="46" height="28" viewBox="0 0 46 28"><ellipse cx="23" cy="24" rx="21" ry="3.500" fill="#c9c65a"/><g fill="#b5792e"><path d="M3 22L1 14l4 3 0-6 4 11zM43 22l2-8-4 3 0-6-4 11z"/></g><path d="M10 8q0-3 4-3t4 3v4q3 5 1 11H9q-2-5 1-10z" fill="#b98f5c"/><path d="M21 5q0-4 5-4t5 4v4q5 6 2 14H20q-4-7 1-13z" fill="#c9a06a"/><path d="M23 12q3-2 6 0 2 5 0 9h-6q-2-5 0-9zM12.500 12q2-1 3.500 0 1.500 5 0 9h-3.500q-1.500-4 0-9z" fill="#e6cd9c"/><g fill="#3a2613"><circle cx="12" cy="8" r="1.200"/><circle cx="16" cy="8" r="1.200"/><circle cx="24" cy="5" r="1.300"/><circle cx="28" cy="5" r="1.300"/></g></svg></label>
  <button class="plain app" aria-label="Visão de tarefas"><svg width="22" height="22"><path d="M6 0h16v16H6z" fill="#f2f2f2"/><path d="M0 6h16v16H0z" fill="#6b6b6b"/><path d="M6 6h10v10H6z" fill="#a9a9a9"/></svg></button>
  <button class="plain app" aria-label="Chat"><svg width="24" height="24"><path d="M12 0a12 12 0 1 1-5 22.500L1 24l1-6A12 12 0 0 1 12 0z" fill="#7b66d9"/><rect x="5" y="7" width="9" height="10" rx="2" fill="#fff"/><path d="M15 11l4-3v8l-4-3z" fill="#fff"/></svg></button>
  <button class="plain app" aria-label="Explorador"><svg width="24" height="22"><path d="M0 1q0-1 1-1h7l3 3h12q1 0 1 1v5H0z" fill="#e3a21a"/><path d="M0 6h9l3-2h12v17q0 1-1 1H1q-1 0-1-1z" fill="#ffce47"/><path d="M4 22v-4q0-2 2-2h12q2 0 2 2v4z" fill="#1c7fc9"/><path d="M8 19h8" stroke="#0c5a94"/></svg></button>
  <button class="plain app open" aria-label="VS Code"><svg width="24" height="24"><path d="M18 0l6 3v18l-6 3L6.500 13.500 2 17l-2-1.500 4-3.500-4-3.500L2 7l4.500 3.500zM18 6.500L10 12l8 5.500z" fill="#1f9cf0"/><path d="M18 0l6 3v18l-6 3z" fill="#3cb0f7"/><path d="M0 15.500L18 0v6.500L2 17z" fill="#0b78c4"/></svg></button>
  <button class="plain app open front" aria-label="Edge"><svg width="24" height="24"><circle cx="12" cy="12" r="12" fill="#1271c4"/><path d="M0 11A12 12 0 0 1 24 12q0 5-6 5-4 0-2.500-3Q17 9 12 8 4 6 0 11z" fill="#35c9c0"/><path d="M12 0a12 12 0 0 1 12 12q0 5-6 5-4 0-2.500-3 1-3-2-5z" fill="#5fd96b" opacity=".75"/><path d="M8 12q0-4 5-4 3 1 3 4-1 3 2 4.500-2 1.500-5 1.200Q8 17 8 12z" fill="#15407f"/><path d="M0 12q2-6 10-5-6 4-3 10 3 5 8 6-4 2-9-.5Q0 19 0 12z" fill="#2fa0e8"/></svg></button>
  <button class="plain app open" aria-label="Docker"><svg width="24" height="24"><circle cx="12" cy="12" r="12" fill="#1d90ee"/><path d="M4 12h12q2-1 1.500-3.500 1.500.5 1.800 2 1.200-.3 2 .3-.6 1.500-2.500 1.400Q17 18.500 10.500 18.500 4 18 4 12zM6 9h2.500v2.300H6zM9 9h2.500v2.300H9zM12 9h2.500v2.300H12zM9 6.200h2.500v2.300H9zM12 6.200h2.500v2.300H12z" fill="#fff"/></svg></button>
  <button class="plain app open" aria-label="Excel"><svg width="24" height="22"><path d="M6 0h18v22H6z" fill="#21a366"/><path d="M15 0h9v6h-9z" fill="#33c481"/><path d="M6 11h18v11H6z" fill="#107c41"/><path d="M15 16h9v6h-9z" fill="#185c37"/><rect y="5" width="13" height="13" rx="1" fill="#107c41"/><path d="M4 8l5 7M9 8l-5 7" stroke="#fff" stroke-width="1.700"/></svg></button>
 </div>
 <div class="tray d-flex align-items-center justify-content-end">
  <svg width="12" height="8"><path class="ln" stroke-width="1.500" d="M1 7l5-5 5 5"/></svg>
  <svg width="18" height="16" class="mx-3" viewBox="0 0 18 16"><path d="M3 12a3.500 3.500 0 0 1 0-7Q5 1 9 2q3 0 4 3 3 1 3 4l-2 3z" fill="#aaa"/><circle cx="12.500" cy="10.500" r="4.500" fill="#4cc2ff"/><path d="M12.500 9.800v3M12.500 7.800v1.200" stroke="#024" stroke-width="1.300"/></svg>
  <svg width="16" height="14"><g fill="none" stroke="#fff" stroke-width="1.300"><path d="M1 5q7-6.500 14 0M3.500 8q4.500-4 9 0M5.800 10.500q2.200-2 4.400 0"/></g><circle cx="8" cy="12.300" r="1.300" fill="#fff"/></svg>
  <svg width="17" height="14" class="mx-2"><path class="ln" stroke-width="1.200" d="M1 5h2.500L7 1.500v11L3.500 9H1zM9.500 5q1.500 2 0 4M11.700 3q3 4 0 8M14 1q4 6 0 12"/></svg>
  <svg width="16" height="12"><rect class="ln" x=".7" y="1.700" width="12.600" height="8.600" rx="2" stroke-width="1.200"/><path d="M2.500 3.500h3.500v5H2.500zM14 4.500h1.500v3H14z" fill="#fff"/></svg>
  <div class="text-end ms-3"><div>00:21</div><div>09/07/2024</div></div>
  <svg width="14" height="16" class="ms-2"><path d="M1 11.500V12h12v-.5l-1.500-2V6q0-5-4.500-5T2.500 6v3.500zM5 13.500h4q-.5 2-2 2t-2-2z" fill="#ddd" stroke="#ddd"/></svg>
 </div>
</footer>

<script src="https://cdn.jsdelivr.net/npm/bootstrap@5.3.0/dist/js/bootstrap.bundle.min.js"></script>
<script>
// the list opens part-way down, with the first row partly under the sticky header
document.getElementById('rows').scrollTop = 47;
</script>
</body>
</html>
